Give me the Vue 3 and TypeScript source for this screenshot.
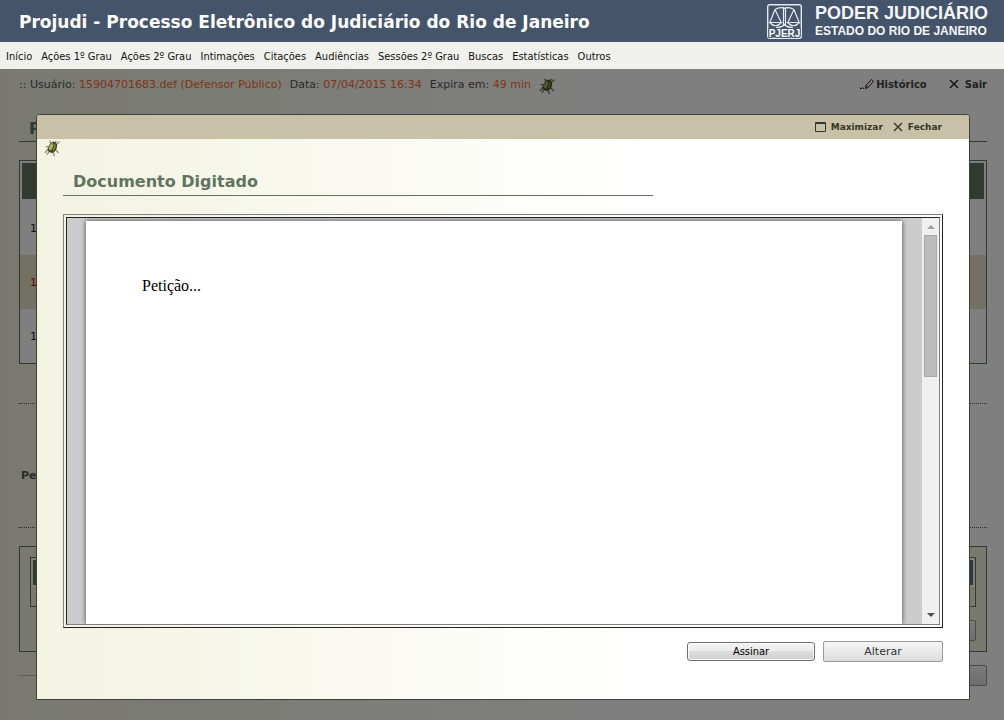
<script setup lang="ts">
import { ref } from 'vue'

const menu: string[] = [
  'Início', 'Ações 1º Grau', 'Ações 2º Grau', 'Intimações', 'Citações',
  'Audiências', 'Sessões 2º Grau', 'Buscas', 'Estatísticas', 'Outros',
]
const rows = [
  { id: 1, text: '1', late: false },
  { id: 2, text: '1', late: true },
  { id: 3, text: '1', late: false },
]
const open = ref(true)
const maximized = ref(false)
</script>

<template>
  <div class="app">
    <header class="top">
      <h1>Projudi - Processo Eletrônico do Judiciário do Rio de Janeiro</h1>
      <div class="brand">
        <svg class="crest" viewBox="0 0 35 35" aria-hidden="true">
          <rect x="0.700" y="0.700" width="33.600" height="33.600" rx="2" fill="none" stroke="#e4e9f0" stroke-width="1.4" />
          <g fill="none" stroke="#e4e9f0" stroke-width="1.2">
            <path d="M16.500 3v19M18.500 3v19" />
            <path d="M8 5.500Q13 2.500 17.500 4.500Q22 2.500 27 5.500" />
            <path d="M8 5.500L3 18M8 5.500L14 18M27 5.500L21 18M27 5.500L32 18" />
            <path d="M2.500 18.500Q8.500 25 14.500 18.500ZM20.500 18.500Q26.500 25 32.500 18.500Z" />
            <path d="M9 23.500Q15 23.500 17.500 20.500Q20 23.500 26 23.500" />
          </g>
          <text x="17.500" y="33" text-anchor="middle">PJERJ</text>
        </svg>
        <div class="brand-text">
          <strong>PODER JUDICIÁRIO</strong>
          <span>ESTADO DO RIO DE JANEIRO</span>
        </div>
      </div>
    </header>

    <nav class="menu">
      <a v-for="item in menu" :key="item" href="#">{{ item }}</a>
    </nav>

    <main class="main">
      <div class="page">
        <div class="userbar">
          <p>
            <span>:: Usuário: <em>15904701683.def (Defensor Público)</em></span>
            <span>Data: <em>07/04/2015 16:34</em></span>
            <span>Expira em: <em>49 min</em></span>
            <svg class="bug" viewBox="0 0 16 18" aria-hidden="true">
              <path d="M7 5L5.500 1.500M11 4L12.500 2M12 6L15.500 2.500M5 8L2 7.500M4 10L1 14M12 11L14.500 14M9 13L10.500 17M5 13L3 15.500" fill="none" stroke="#77776c" stroke-width="1.3" />
              <path d="M9 2.500Q13.500 3 13 8Q12 13 8 14Q2.500 13 4 9Q5.500 4 9 2.500Z" fill="#45491f" />
              <path d="M9 3.500Q6 5 4.500 9Q5 12 7 11.500Q10 8 9 3.500Z" fill="#a7ad62" />
              <path d="M10.500 3.500Q12.500 6 11 10L8.500 13Q10 7 10.500 3.500Z" fill="#8a9440" />
            </svg>
          </p>
          <div class="session">
            <a href="#">
              <svg class="pen" viewBox="0 0 15 12" aria-hidden="true">
                <path d="M0.500 9.500L2 11L3.500 9.500L5 11M6.500 10.500L7 7.500L12.500 1.500L14.500 3.500L9 9.500ZM7 7.500L9 9.500" fill="none" stroke="#222" />
              </svg>Histórico</a>
            <a href="#">
              <svg class="cross" viewBox="0 0 10 10" aria-hidden="true"><path d="M1 1L9 9M9 1L1 9" fill="none" stroke="#222" stroke-width="1.4" /></svg>Sair</a>
          </div>
        </div>

        <h2 class="page-title">P</h2>
        <table class="grid">
          <thead><tr><th scope="col"></th></tr></thead>
          <tbody>
            <tr v-for="row in rows" :key="row.id" :class="{ late: row.late }"><td>{{ row.text }}</td></tr>
          </tbody>
        </table>
        <div class="section">Pe</div>
        <div class="box">
          <table class="subgrid">
            <thead><tr><th scope="col"></th></tr></thead>
            <tbody><tr><td></td></tr></tbody>
          </table>
          <button class="btn" type="button"></button>
        </div>
        <div class="foot">
          <hr />
          <button class="btn" type="button"></button>
        </div>
      </div>

      <div v-if="open" class="backdrop">
        <section class="dialog" :class="{ maximized }" role="dialog" aria-labelledby="doc-title">
          <div class="dialog-bar">
            <button type="button" @click="maximized = !maximized">
              <svg class="max" viewBox="0 0 11 10" aria-hidden="true"><path d="M0.500 0.500h10v9h-10zM0 1.500h11" fill="none" stroke="#33362c" /></svg>Maximizar</button>
            <button type="button" @click="open = false">
              <svg class="cross" viewBox="0 0 10 10" aria-hidden="true"><path d="M1 1L9 9M9 1L1 9" fill="none" stroke="#33362c" stroke-width="1.4" /></svg>Fechar</button>
          </div>
          <div class="dialog-body">
            <svg class="bug" viewBox="0 0 16 18" aria-hidden="true">
              <path d="M7 5L5.500 1.500M11 4L12.500 2M12 6L15.500 2.500M5 8L2 7.500M4 10L1 14M12 11L14.500 14M9 13L10.500 17M5 13L3 15.500" fill="none" stroke="#8f8f86" stroke-width="1.300" />
              <path d="M9 2.500Q13.500 3 13 8Q12 13 8 14Q2.500 13 4 9Q5.500 4 9 2.500Z" fill="#3b3f1c" />
              <path d="M9 3.500Q6 5 4.500 9Q5 12 7 11.500Q10 8 9 3.500Z" fill="#a7ad62" />
              <path d="M10.500 3.500Q12.500 6 11 10L8.500 13Q10 7 10.500 3.500Z" fill="#7c8638" />
            </svg>
            <div class="doc">
              <h2 id="doc-title">Documento Digitado</h2>
              <div class="frame">
                <div class="viewer">
                  <div class="desk"><article class="sheet">Petição...</article></div>
                  <div class="scroll" aria-hidden="true">
                    <svg viewBox="0 0 8 4"><path d="M0 4L4 0L8 4Z" fill="#a0a0a0" /></svg>
                    <div class="thumb"></div>
                    <svg viewBox="0 0 8 4"><path d="M0 0L4 4L8 0Z" fill="#505050" /></svg>
                  </div>
                </div>
              </div>
              <div class="actions">
                <button class="sign" type="button">Assinar</button>
                <button class="btn edit" type="button">Alterar</button>
              </div>
            </div>
          </div>
        </section>
      </div>
    </main>
  </div>
</template>

<style>
body { margin: 0; }
</style>

<style scoped>
* { box-sizing: border-box; }
.app {
  display: flex;
  flex-direction: column;
  min-height: 100vh;
  font-family: "DejaVu Sans", sans-serif;
  font-size: 11px;
  color: #555;
}
a { color: inherit; text-decoration: none; }
em { font-style: normal; color: #ff6a30; }

.top {
  display: flex;
  justify-content: space-between;
  height: 42px;
  padding: 0 16px 0 19px;
  background: #44546a;
  color: #fff;
}
.top h1 { margin: 0; font-size: 17px; line-height: 44px; white-space: nowrap; }
.brand { display: flex; gap: 13px; padding-top: 3px; }
.crest { width: 35px; height: 35px; margin-top: 1px; }
.crest text { font: bold 10px "Liberation Sans", sans-serif; fill: #fff; stroke: #44546a; stroke-width: 2px; paint-order: stroke; }
.brand-text { display: flex; flex-direction: column; font-family: "Liberation Sans", sans-serif; font-weight: bold; white-space: nowrap; color: #f4f6fa; }
.brand-text strong { font-size: 18px; line-height: 20px; }
.brand-text span { font-size: 12px; line-height: 17px; }

.menu {
  display: flex;
  gap: 9px;
  height: 27px;
  padding: 0 6px;
  background: #f0f1ec;
  font-family: "DejaVu Sans Condensed", sans-serif;
  line-height: 29px;
  color: #111;
  white-space: nowrap;
}

.main { position: relative; flex: 1; background: linear-gradient(90deg, #f2f3e1, #fff 600px); }
.page { padding: 0 17px 20px 19px; }
.userbar { display: flex; justify-content: space-between; height: 30px; line-height: 31px; white-space: nowrap; }
.userbar p { display: flex; gap: 8px; margin: 0; }
.userbar .bug { margin-top: 8px; }
.bug { display: block; width: 16px; height: 18px; }
.session { display: flex; gap: 22px; font-weight: bold; font-size: 10px; color: #444; }
.session a { display: flex; align-items: center; gap: 2px; }
.session a:last-child { gap: 6px; }
.pen { width: 15px; height: 12px; }
.cross { width: 10px; height: 10px; }
.page-title { margin: 18px 0; padding-left: 10px; border-bottom: 1px solid #607460; font-size: 16px; line-height: 24px; color: #607460; }

table { width: 100%; border: 1px solid #607460; border-spacing: 0; }
th { padding: 0; border: 2px solid transparent; background: #607460 padding-box; }
.grid { background: #fff; color: #222; }
.grid th { height: 38px; }
.grid td { height: 54px; padding: 0 10px; }
.grid tr { height: 54px; }
.grid thead tr { height: 40px; }
.grid .late { background: #e8e0c8; color: #d00; }
.section { display: flex; align-items: center; height: 125px; margin: 39px 0 18px; padding: 19px 2px 0; border: dotted #555; border-width: 1px 0; font-weight: bold; }
.box { padding: 10px; border: 1px solid #607460; background: #f2f3e1; }
.subgrid thead { background: #fff; }
.subgrid th { height: 29px; }
.subgrid td { height: 19px; padding: 0; }
.btn { width: 120px; height: 21px; padding: 0; border: 1px solid #999; border-radius: 2px; background: linear-gradient(#f6f6f6, #dcdcdc); font: 11px "DejaVu Sans", sans-serif; color: #333; }
.box .btn { display: block; margin: 13px 0 0 auto; }
.foot { display: flex; align-items: center; margin-top: 13px; }
.foot hr { flex: 1; margin: 0; border: 0; border-top: 1px solid #bbb; }

.backdrop { position: absolute; inset: 0; display: flex; padding: 45px 34px 20px 36px; background: rgba(0, 0, 0, 0.5); }
.dialog { flex: 1; display: flex; flex-direction: column; border: 1px solid #3e4137; border-radius: 4px 4px 0 0; background: linear-gradient(90deg, #f2f3e1, #fff 600px); overflow: hidden; }
.dialog-bar { display: flex; justify-content: flex-end; gap: 10px; height: 24px; padding-right: 27px; background: #c8c1a8; }
.dialog-bar button { display: flex; align-items: center; gap: 5px; padding: 0; border: 0; background: none; font: bold 9px "DejaVu Sans", sans-serif; color: #33362c; }
.max { width: 11px; height: 10px; }
.dialog-body { flex: 1; display: flex; flex-direction: column; padding: 0 26px 37px 7px; }
.doc { flex: 1; display: flex; flex-direction: column; margin: 12px 0 0 19px; }
.doc h2 { width: 67%; margin: 0 0 18px; padding-left: 10px; border-bottom: 1px solid #607460; font-size: 16px; line-height: 26px; color: #607460; }
.frame { flex: 1; display: flex; padding: 2px; border: 1px solid; border-color: #808080 #222 #222 #808080; }
.viewer { flex: 1; display: flex; border: 1px solid; border-color: #222 #808080 #808080 #222; background: #ccc; }
.desk { flex: 1; display: flex; padding: 3px 20px 0 19px; overflow: hidden; }
.sheet { flex: 1; padding: 56px; background: #fff; box-shadow: 0 0 5px #444; font: 16px/18px "Liberation Serif", serif; color: #000; }
.scroll { display: flex; flex-direction: column; align-items: center; width: 17px; padding: 7px 2px; background: #f0f0f0; }
.scroll svg { width: 8px; height: 4px; }
.thumb { width: 13px; height: 142px; margin: 6px 0 auto; border: 1px solid #a8a8a8; background: #bcbcbc; }
.actions { display: flex; justify-content: flex-end; align-items: center; gap: 8px; margin-top: 13px; }
.sign { width: 128px; height: 19px; padding: 0; border: 1px solid #707070; border-radius: 3px; background: linear-gradient(#f2f2f2, #ebebeb 50%, #ddd 50%, #cfcfcf); box-shadow: inset 0 0 0 1px #fbfbfb; font: 11px "DejaVu Sans Condensed", sans-serif; color: #000; }
.dialog.maximized { margin: -45px -34px -20px -36px; }
</style>
